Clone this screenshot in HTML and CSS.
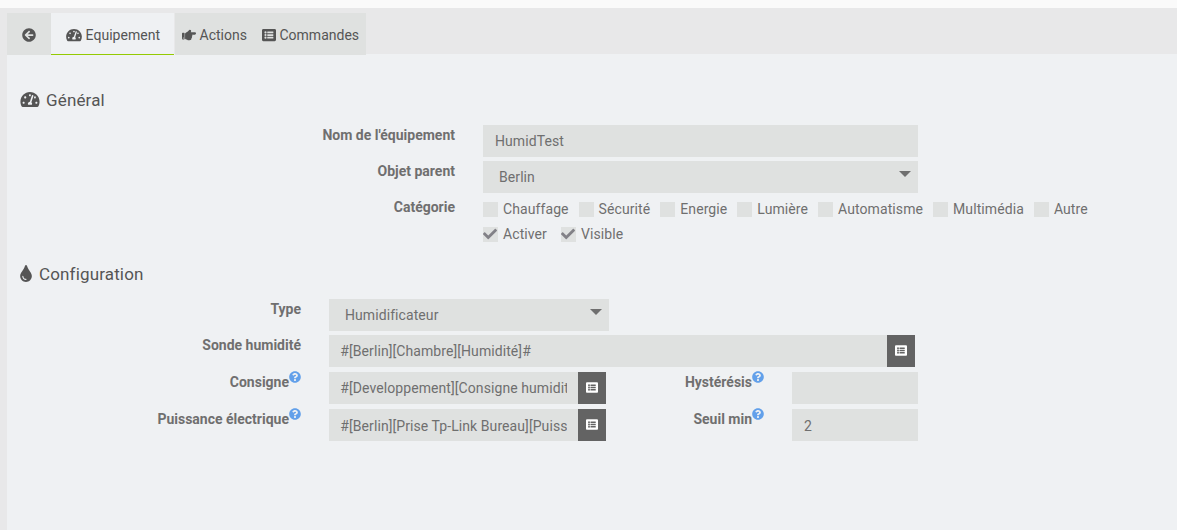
FILE: index.html
```html
<!DOCTYPE html>
<html lang="fr">
<head>
<meta charset="utf-8">
<title>Equipement</title>
<link rel="stylesheet" href="styles.css">
</head>
<body>
<svg class="sprite" aria-hidden="true">
  <symbol id="gauge" viewBox="0 0 576 512"><path d="M288 32C128.94 32 0 160.94 0 320c0 52.8 14.25 102.26 39.06 144.8 5.61 9.62 16.3 15.2 27.44 15.2h443c11.14 0 21.83-5.58 27.44-15.2C561.75 422.26 576 372.8 576 320c0-159.06-128.94-288-288-288zm0 64c14.71 0 26.58 10.13 30.32 23.65-1.11 2.26-2.64 4.23-3.45 6.67l-9.22 27.67c-5.13 3.49-10.97 6.01-17.64 6.01-17.67 0-32-14.33-32-32S270.33 96 288 96zM96 384c-17.67 0-32-14.33-32-32s14.33-32 32-32 32 14.33 32 32-14.33 32-32 32zm48-160c-17.67 0-32-14.33-32-32s14.33-32 32-32 32 14.33 32 32-14.33 32-32 32zm246.77-72.41l-61.33 184C343.13 347.33 352 364.54 352 384c0 11.72-3.38 22.55-8.88 32H232.88c-5.5-9.45-8.88-20.28-8.88-32 0-33.94 26.5-61.43 59.9-63.59l61.34-184.01c4.17-12.56 17.73-19.45 30.36-15.17 12.57 4.19 19.35 17.79 15.17 30.36zm14.66 57.2l15.52-46.55c3.47-1.29 7.13-2.23 11.05-2.23 17.67 0 32 14.33 32 32s-14.33 32-32 32c-11.38-.01-20.89-6.28-26.57-15.22zM480 384c-17.67 0-32-14.33-32-32s14.33-32 32-32 32 14.33 32 32-14.33 32-32 32z"/></symbol>
  <symbol id="back" viewBox="0 0 512 512"><path d="M256 504C119 504 8 393 8 256S119 8 256 8s248 111 248 248-111 248-248 248zm28.9-143.6L209.4 288H392c13.3 0 24-10.7 24-24v-16c0-13.3-10.7-24-24-24H209.4l75.5-72.4c9.7-9.3 9.9-24.8.4-34.3l-11-10.9c-9.4-9.4-24.6-9.4-33.9 0L107.7 239c-9.4 9.4-9.4 24.6 0 33.9l132.7 132.7c9.4 9.4 24.6 9.4 33.9 0l11-10.9c9.5-9.5 9.3-25-.4-34.3z"/></symbol>
  <symbol id="hand" viewBox="0 0 512 512"><path d="M512 199.652c0 23.625-20.65 43.826-44.8 43.826h-99.851c16.34 17.048 18.346 49.766-6.299 70.944 14.288 22.829 2.147 53.017-16.45 62.315C353.574 425.878 322.654 448 272 448c-2.746 0-13.276-.203-16-.195-61.971.168-76.894-31.065-123.731-38.315C120.596 407.683 112 397.599 112 385.786V214.261l.002-.001c.011-18.366 10.607-35.889 28.464-43.845 28.886-12.994 95.413-49.038 107.534-77.323 7.797-18.194 21.384-29.084 40-29.092 34.222-.014 57.752 35.098 44.119 66.908-3.583 8.359-8.312 16.67-14.153 24.918H467.2c23.45 0 44.8 20.543 44.8 43.826zM96 200v192c0 13.255-10.745 24-24 24H24c-13.255 0-24-10.745-24-24V200c0-13.255 10.745-24 24-24h48c13.255 0 24 10.745 24 24zM68 368c0-11.046-8.954-20-20-20s-20 8.954-20 20 8.954 20 20 20 20-8.954 20-20z"/></symbol>
  <symbol id="list" viewBox="0 0 512 512"><path fill-rule="evenodd" d="M464 480H48c-26.51 0-48-21.49-48-48V80c0-26.51 21.49-48 48-48h416c26.51 0 48 21.49 48 48v352c0 26.51-21.49 48-48 48zM88 160a40 40 0 1 0 80 0a40 40 0 1 0-80 0zM88 256a40 40 0 1 0 80 0a40 40 0 1 0-80 0zM88 352a40 40 0 1 0 80 0a40 40 0 1 0-80 0zM204 128h200q12 0 12 12v40q0 12-12 12H204q-12 0-12-12v-40q0-12 12-12zM204 224h200q12 0 12 12v40q0 12-12 12H204q-12 0-12-12v-40q0-12 12-12zM204 320h200q12 0 12 12v40q0 12-12 12H204q-12 0-12-12v-40q0-12 12-12z"/></symbol>
  <symbol id="drop" viewBox="0 0 352 512"><path d="M205.22 22.09c-7.94-28.78-49.44-30.12-58.44 0C100.01 179.85 0 222.72 0 333.91 0 432.35 78.72 512 176 512s176-79.65 176-178.09c0-111.75-99.79-153.34-146.78-311.82zM176 448c-61.75 0-112-50.25-112-112 0-8.84 7.16-16 16-16s16 7.16 16 16c0 44.11 35.89 80 80 80 8.84 0 16 7.16 16 16s-7.16 16-16 16z"/></symbol>
  <symbol id="help" viewBox="0 0 512 512"><path d="M504 256c0 136.997-111.043 248-248 248S8 392.997 8 256C8 119.083 119.043 8 256 8s248 111.083 248 248zM262.655 90c-54.497 0-89.255 22.957-116.549 63.758-3.536 5.286-2.353 12.415 2.715 16.258l34.699 26.31c5.205 3.947 12.621 3.008 16.665-2.122 17.864-22.658 30.113-35.797 57.303-35.797 20.429 0 45.698 13.148 45.698 32.958 0 14.976-12.363 22.667-32.534 33.976C247.128 238.528 216 254.941 216 296v4c0 6.627 5.373 12 12 12h56c6.627 0 12-5.373 12-12v-1.333c0-28.462 83.186-29.647 83.186-106.667 0-58.002-60.165-102-116.531-102zM256 338c-25.365 0-46 20.635-46 46 0 25.364 20.635 46 46 46s46-20.636 46-46c0-25.365-20.635-46-46-46z"/></symbol>
  <symbol id="check" viewBox="0 0 512 512"><path d="M173.898 439.404l-166.4-166.4c-9.997-9.997-9.997-26.206 0-36.204l36.203-36.204c9.997-9.998 26.207-9.998 36.204 0L192 312.69 432.095 72.596c9.997-9.997 26.207-9.997 36.204 0l36.203 36.204c9.997 9.997 9.997 26.206 0 36.204l-294.4 294.401c-9.998 9.997-26.207 9.997-36.204-.001z"/></symbol>
</svg>
<header class="topbar"></header>
<main class="page">
  <nav class="tabs">
    <a class="tab tab-back"><svg class="icon"><use href="#back"/></svg></a>
    <a class="tab tab-active"><svg class="icon icon-wide"><use href="#gauge"/></svg><span>Equipement</span></a>
    <a class="tab tab-actions"><svg class="icon"><use href="#hand"/></svg><span>Actions</span></a>
    <a class="tab tab-commands"><svg class="icon"><use href="#list"/></svg><span>Commandes</span></a>
  </nav>
  <div class="panel">
    <h2 class="legend"><svg class="legend-gauge"><use href="#gauge"/></svg><span>Général</span></h2>
    <form class="general">
      <label class="label">Nom de l'équipement</label>
      <input class="field" value="HumidTest">
      <label class="label">Objet parent</label>
      <div class="field select"><span>Berlin</span><i class="caret"></i></div>
      <label class="label">Catégorie</label>
      <div class="checks">
        <div class="check-row">
          <label class="check"><i class="box"></i>Chauffage</label>
          <label class="check"><i class="box"></i>Sécurité</label>
          <label class="check"><i class="box"></i>Energie</label>
          <label class="check"><i class="box"></i>Lumière</label>
          <label class="check"><i class="box"></i>Automatisme</label>
          <label class="check"><i class="box"></i>Multimédia</label>
          <label class="check"><i class="box"></i>Autre</label>
        </div>
        <div class="check-row check-row-state">
          <label class="check"><i class="box"><svg class="tick"><use href="#check"/></svg></i>Activer</label>
          <label class="check"><i class="box"><svg class="tick"><use href="#check"/></svg></i>Visible</label>
        </div>
      </div>
    </form>
    <h2 class="legend legend-config"><svg class="legend-drop"><use href="#drop"/></svg><span>Configuration</span></h2>
    <form class="config">
      <div class="row">
        <label class="label">Type</label>
        <div class="field select type"><span>Humidificateur</span><i class="caret"></i></div>
      </div>
      <div class="row">
        <label class="label">Sonde humidité</label>
        <div class="group group-wide"><input class="field" value="#[Berlin][Chambre][Humidité]#"><button type="button" class="pick"><svg><use href="#list"/></svg></button></div>
      </div>
      <div class="row row-spaced">
        <label class="label">Consigne<svg class="help"><use href="#help"/></svg></label>
        <div class="group"><input class="field" value="#[Developpement][Consigne humidité]#"><button type="button" class="pick"><svg><use href="#list"/></svg></button></div>
        <label class="label">Hystérésis<svg class="help"><use href="#help"/></svg></label>
        <input class="field" value="">
      </div>
      <div class="row row-spaced row-low">
        <label class="label">Puissance électrique<svg class="help"><use href="#help"/></svg></label>
        <div class="group"><input class="field" value="#[Berlin][Prise Tp-Link Bureau][Puissance]#"><button type="button" class="pick"><svg><use href="#list"/></svg></button></div>
        <label class="label">Seuil min<svg class="help"><use href="#help"/></svg></label>
        <input class="field" value="2">
      </div>
    </form>
  </div>
</main>
</body>
</html>
```
FILE: styles.css
```css
* { box-sizing: border-box; }
body {
  margin: 0;
  height: 530px;
  overflow: hidden;
  background: #e8e8e9;
  color: #6f6f6f;
  font: 14px/20px Roboto, "Liberation Sans", sans-serif;
}
svg { display: block; fill: currentColor; flex: none; }
.sprite { display: none; }
.topbar { height: 8px; background: #fafafa; }
.page { padding: 5px 0 0 7px; }
.tabs { display: flex; height: 41px; color: #555; }
.tab {
  display: flex;
  align-items: center;
  gap: 3.5px;
  height: 42px;
  padding: 2px 7px 0 7px;
  background: #dfe1e0;
  position: relative;
}
.tab-back { width: 44px; padding-left: 15px; }
.tab-active {
  width: 123px;
  margin-right: 1px;
  padding: 3px 0 0 15px;
  background: #eff1f3;
  border-bottom: 1px solid #94ca02;
  letter-spacing: 0.05px;
}
.tab-actions { width: 80px; }
.tab-commands { width: 111px; }
.icon { width: 14px; height: 14px; }
.icon-wide { width: 16px; }
.panel { height: 476px; padding: 36px 0 0 13px; background: #eff1f3; }
.legend {
  display: flex;
  align-items: center;
  margin: 0;
  height: 20px;
  color: #555;
  font-size: 17px;
  font-weight: 400;
  letter-spacing: 0.15px;
}
.legend-gauge { width: 20px; height: 17px; margin: -1px 6px 0 0; }
.legend-drop { width: 12px; height: 17px; margin: -1px 7px 0 0; }
.legend-config { margin-top: 35px; }
.label {
  display: flex;
  justify-content: flex-end;
  height: 20px;
  font-weight: 700;
  white-space: nowrap;
}
.field {
  display: block;
  width: 100%;
  height: 32px;
  padding: 0 11px 0 12px;
  border: 0;
  border-radius: 0;
  background: #dfe1e0;
  color: inherit;
  font: inherit;
  letter-spacing: 0.08px;
}
.general {
  display: grid;
  grid-template-columns: 435px 435px;
  grid-auto-rows: 32px;
  gap: 4px 28px;
  margin-top: 15px;
}
.select { display: flex; justify-content: space-between; padding: 0 7px 0 16px; line-height: 32px; }
.caret {
  width: 0;
  margin-top: 10px;
  height: 0;
  border: 6px solid transparent;
  border-top-color: #6f6f6f;
  border-bottom: 0;
}
.checks { width: 640px; padding-top: 2px; letter-spacing: 0.09px; }
.check-row { display: flex; gap: 10px; }
.check-row-state { margin-top: 5px; gap: 14px; }
.check { display: flex; gap: 5px; height: 20px; align-items: center; }
.box { width: 15px; height: 15px; margin-top: 3px; align-self: flex-start; background: #dfe1e0; }
.tick { width: 14px; height: 14px; color: #828187; }
.config { display: grid; row-gap: 4px; margin-top: 15px; }
.row { display: grid; grid-template-columns: 281px 277px 130px 126px; column-gap: 28px; }
.row .field { padding-left: 12px; }
.row .group .field { padding-left: 11.3px; }
.row .select.type { width: 280px; padding-left: 16px; }
.row-spaced { margin-top: 1px; }
.row-low input { padding-top: 2px; }
.group { display: flex; }
.group-wide { width: 586px; }
.pick {
  display: flex;
  flex: none;
  width: 28px;
  height: 32px;
  padding: 9px 8px;
  border: 0;
  background: #636363;
  color: #fff;
}
.pick svg { width: 12px; height: 13px; }
.help { width: 12px; height: 12px; margin-top: -1px; color: #62a0ea; }
```
